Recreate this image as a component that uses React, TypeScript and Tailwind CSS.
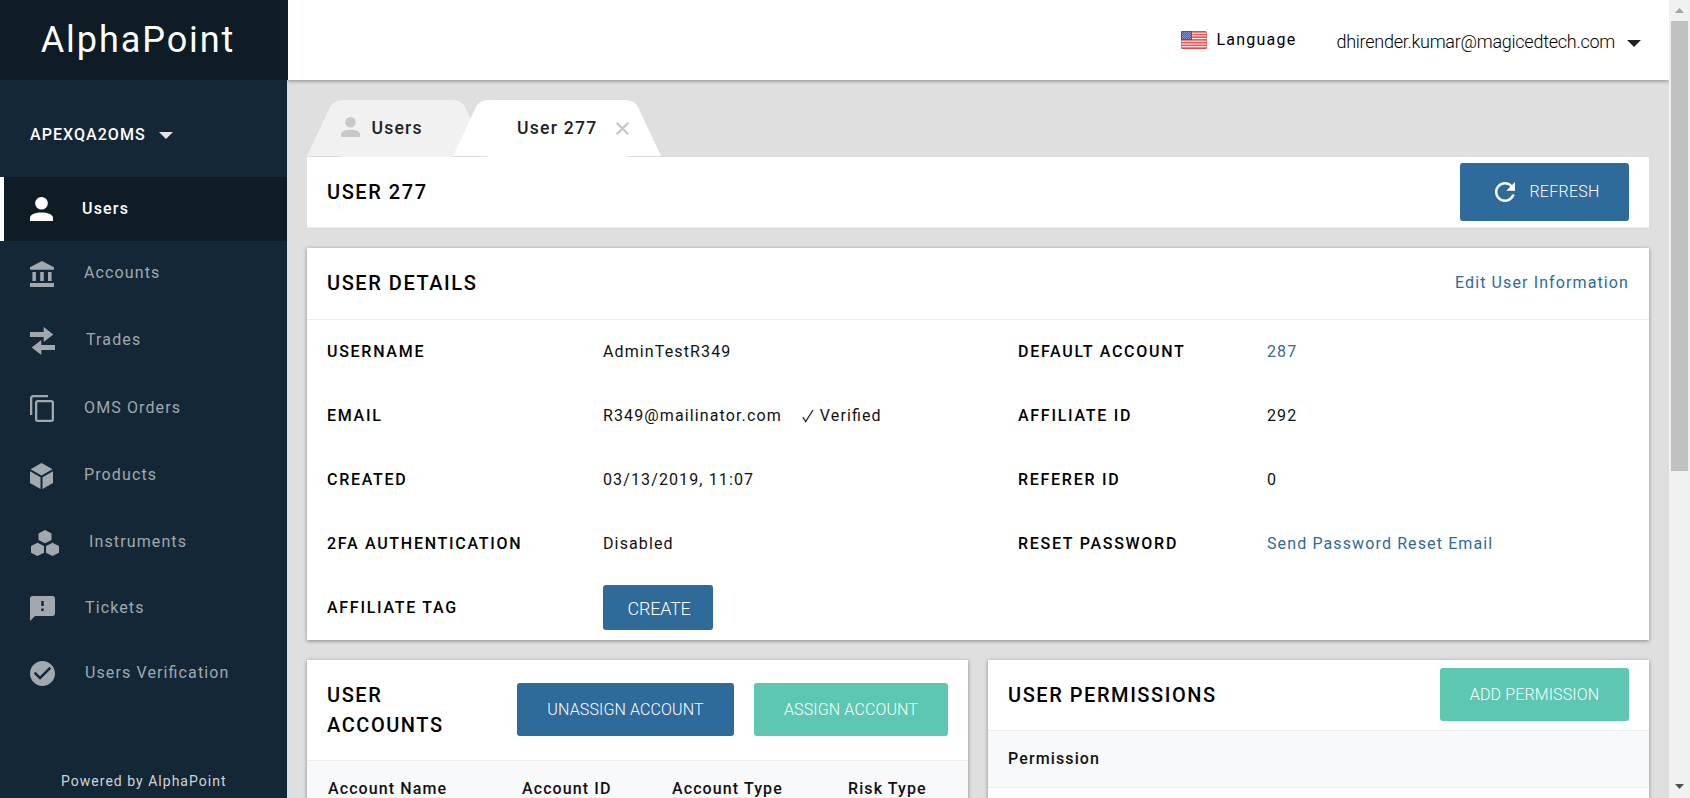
import type { ReactNode } from "react";

type IconProps = { className?: string };

function PersonIcon({ className }: IconProps) {
  return (
    <svg className={className} width="23" height="24" viewBox="0 0 23 24" fill="currentColor">
      <circle cx="11.5" cy="6.3" r="6.3" />
      <path d="M0 24v-3.4c0-3.5 6.2-5.2 11.5-5.2S23 17.100 23 20.600V24z" />
    </svg>
  );
}

function BankIcon() {
  return (
    <svg width="24" height="26" viewBox="0 0 24 26" fill="currentColor">
      <path d="M12 0 24 6.200V8.700H0V6.200zM2.400 11h3.500v9H2.400zM10.200 11h3.600v9h-3.600zM18 11h3.600v9H18zM0 22h24v4H0z" />
    </svg>
  );
}

function SwapIcon() {
  return (
    <svg width="25" height="28" viewBox="0 0 25 28" fill="currentColor">
      <path d="M0 5h13.700V0L23.300 7.500 13.700 15v-5H0zM25 18H11.300v-5L1.700 20.500l9.600 7.500v-5H25z" />
    </svg>
  );
}

function CopyIcon() {
  return (
    <svg width="24" height="27" viewBox="0 0 24 27" fill="none" stroke="currentColor" strokeWidth="2.300">
      <path d="M1.150 20V3.150a2 2 0 0 1 2-2H18" />
      <rect x="6.150" y="6.150" width="16.700" height="19.700" rx="1.500" />
    </svg>
  );
}

function CubeIcon() {
  return (
    <svg width="23" height="26" viewBox="0 0 23 26" fill="currentColor">
      <path d="M11.500 0 22.500 6.200 11.500 12.400.5 6.200zM0 8.300l10.500 6V26L0 20zM23 8.300l-10.500 6V26L23 20z" />
    </svg>
  );
}

function HexagonsIcon() {
  return (
    <svg className="ml-px" width="28" height="26" viewBox="0 0 28 26" fill="currentColor">
      <path d="M14 0l6.500 3.400v6.600L14 13.300 7.500 10V3.400zM6.500 12.700 13 16v6.700L6.500 26 0 22.700V16zM21.500 12.700 28 16v6.700L21.500 26 15 22.700V16z" />
    </svg>
  );
}

function FeedbackIcon() {
  return (
    <svg width="25" height="25" viewBox="2 2 20 20" fill="currentColor">
      <path d="M20 2H4c-1.100 0-1.990.9-1.990 2L2 22l4-4h14c1.100 0 2-.9 2-2V4c0-1.100-.9-2-2-2zm-7 12h-2v-2h2v2zm0-4h-2V6h2v4z" />
    </svg>
  );
}

function CheckCircleIcon() {
  return (
    <svg width="25" height="25" viewBox="2 2 20 20" fill="currentColor">
      <path d="M12 2C6.480 2 2 6.480 2 12s4.480 10 10 10 10-4.480 10-10S17.520 2 12 2zm-2 15l-5-5 1.410-1.410L10 14.170l7.590-7.590L19 8l-9 9z" />
    </svg>
  );
}

function RefreshIcon() {
  return (
    <svg width="20" height="20" viewBox="4 4 16 16" fill="currentColor">
      <path d="M17.650 6.350C16.200 4.900 14.210 4 12 4c-4.420 0-7.990 3.580-7.990 8s3.570 8 7.990 8c3.730 0 6.840-2.550 7.730-6h-2.080c-.82 2.330-3.040 4-5.650 4-3.310 0-6-2.690-6-6s2.690-6 6-6c1.660 0 3.140.69 4.220 1.780L13 11h7V4l-2.350 2.350z" />
    </svg>
  );
}

function Caret({ className }: IconProps) {
  return (
    <svg className={className} width="14" height="7" viewBox="0 0 14 7" fill="currentColor">
      <path d="M0 0h14L7 7z" />
    </svg>
  );
}

function Flag() {
  return (
    <svg width="26" height="18" viewBox="0 0 26 18">
      <defs>
        <clipPath id="flag">
          <rect width="26" height="18" rx="1.500" />
        </clipPath>
        <pattern id="stars" width="2" height="2" patternUnits="userSpaceOnUse">
          <rect width="2" height="2" fill="#4763b0" />
          <rect width="1" height="1" fill="#8494cb" />
          <rect x="1" y="1" width="1" height="1" fill="#8494cb" />
        </pattern>
      </defs>
      <g clipPath="url(#flag)">
        <rect width="26" height="18" fill="#fff" />
        <path
          d="M0 .8h26M0 3.500h26M0 6.200h26M0 8.900h26M0 11.600h26M0 14.300h26M0 17.200h26"
          stroke="#ee5a5a"
          strokeWidth="1.700"
        />
        <rect width="11" height="9" fill="url(#stars)" />
        <rect x=".5" y=".5" width="10" height="8" fill="none" stroke="#3d55a2" />
      </g>
      <rect x=".5" y=".5" width="25" height="17" rx="1.500" fill="none" stroke="#a33" strokeOpacity=".35" />
    </svg>
  );
}

const nav: { label: string; icon: ReactNode; row: string; text: string }[] = [
  { label: "Accounts", icon: <BankIcon />, row: "h-[66px]", text: "pl-[30px] pb-0.5" },
  { label: "Trades", icon: <SwapIcon />, row: "h-[68px]", text: "pl-[31px] pb-0.5" },
  { label: "OMS Orders", icon: <CopyIcon />, row: "h-[67px]", text: "pl-[30px] pb-px" },
  { label: "Products", icon: <CubeIcon />, row: "h-[67px]", text: "pl-[31px] pb-0.5" },
  { label: "Instruments", icon: <HexagonsIcon />, row: "h-[67px]", text: "pl-[30px] pb-0.5" },
  { label: "Tickets", icon: <FeedbackIcon />, row: "h-[65px]", text: "pl-[30px] pb-0.5" },
  { label: "Users Verification", icon: <CheckCircleIcon />, row: "h-[65px]", text: "pl-[30px] pb-0.5" },
];

function Sidebar() {
  return (
    <aside className="flex w-[287px] shrink-0 flex-col bg-[#142736]">
      <div className="z-10 flex h-20 w-[288px] shrink-0 items-center justify-center bg-[#0e1c26] pr-3 text-[36px] tracking-[1.94px] text-white">
        AlphaPoint
      </div>
      <div className="flex h-[97px] shrink-0 items-center pl-[30px] pt-3 text-base font-medium tracking-[1.05px] text-white">
        APEXQA2OMS
        <Caret className="ml-[13px] mt-0.5 text-[#e3e5e7]" />
      </div>
      <nav className="text-base tracking-[1.12px] text-[#a1a8ae]">
        <a className="flex h-16 items-center border-l-4 border-white bg-[#0e1c26] pl-[26px] font-medium tracking-[1.2px] text-white">
          <PersonIcon />
          <span className="pl-[29px]">Users</span>
        </a>
        {nav.map((item) => (
          <a key={item.label} className={`flex items-center pl-[30px] ${item.row}`}>
            {item.icon}
            <span className={item.text}>{item.label}</span>
          </a>
        ))}
      </nav>
      <div className="mt-auto pb-[7px] pl-[61px] text-sm tracking-[1.02px] text-[#d0d4d7]">Powered by AlphaPoint</div>
    </aside>
  );
}

function Header() {
  return (
    <header className="z-[5] flex h-20 shrink-0 items-center justify-end bg-white pr-7 shadow-[0_1px_4px_rgba(0,0,0,0.4)]">
      <Flag />
      <span className="pl-[10px] text-base tracking-[1.22px] text-black">Language</span>
      <span className="pl-10 pt-[3px] text-[18px] font-light tracking-[-0.26px] text-black">
        dhirender.kumar@magicedtech.com
      </span>
      <Caret className="ml-3 mt-[7px] text-[#222]" />
    </header>
  );
}

function Tabs() {
  return (
    <div className="flex h-[57px] shrink-0">
      <div className="relative flex h-[57px] w-[181px] items-center pl-[34px]">
        <svg className="absolute left-0 top-0" width="181" height="57" viewBox="0 0 181 57">
          <path d="M0 56 23 7Q26.500 0 36 0H145Q154.500 0 158 7L181 56V57H34V56z" fill="#f1f1f1" />
        </svg>
        <PersonIcon className="relative mb-[3px] h-5 w-[19px] text-[#c8c8c8]" />
        <span className="relative pl-[11.5px] text-[17.6px] font-medium tracking-[1.2px] text-[#222]">Users</span>
      </div>
      <div className="relative -ml-[35px] flex h-[57px] w-[208px] items-center pl-16">
        <svg className="absolute left-0 top-0" width="208" height="57" viewBox="0 0 208 57">
          <path d="M0 56H34V57H0z" fill="#dedede" />
          <path d="M0 56 23 7Q26.500 0 36 0H172Q181.500 0 185 7L208 56H174V57H34V56z" fill="#fff" />
        </svg>
        <span className="relative text-[17.6px] font-medium tracking-[1.25px] text-[#222]">User 277</span>
        <svg className="relative mb-px ml-[18px]" width="13" height="13" viewBox="0 0 13 13" stroke="#c4c4c4" strokeWidth="2">
          <path d="m.7.7 11.600 11.600M12.300.7.7 12.300" />
        </svg>
      </div>
    </div>
  );
}

const buttonBase = "flex items-center justify-center rounded-[3px] font-light text-white";

function Heading({ children }: { children: ReactNode }) {
  return <h2 className="text-[20px] font-medium leading-[30px] tracking-[1.55px] text-black">{children}</h2>;
}

const card = "bg-white shadow-[0_1px_4px_rgba(0,0,0,0.4)]";
const label = "font-medium tracking-[1.72px] text-black";
const link = "text-[#2e6a9a]";

const rows: { left: string; value: ReactNode; right?: string; rightValue?: ReactNode }[] = [
  { left: "USERNAME", value: "AdminTestR349", right: "DEFAULT ACCOUNT", rightValue: <a className={link}>287</a> },
  {
    left: "EMAIL",
    value: (
      <span className="flex items-center">
        R349@mailinator.com
        <svg className="ml-5 mr-[6px]" width="12" height="14" viewBox="0 0 12 14" fill="none" stroke="#222">
          <path d="M.8 8.200 3.700 12.500 11 1" strokeWidth="1.300" />
        </svg>
        Verified
      </span>
    ),
    right: "AFFILIATE ID",
    rightValue: "292",
  },
  { left: "CREATED", value: "03/13/2019, 11:07", right: "REFERER ID", rightValue: "0" },
  {
    left: "2FA AUTHENTICATION",
    value: "Disabled",
    right: "RESET PASSWORD",
    rightValue: <a className={link}>Send Password Reset Email</a>,
  },
  {
    left: "AFFILIATE TAG",
    value: (
      <button className={`${buttonBase} mb-px h-[45px] w-[110px] bg-[#2e6a9a] pl-0.5 pt-0.5 text-[18px] tracking-[-0.25px]`}>
        CREATE
      </button>
    ),
  },
];

function Details() {
  return (
    <section className={`h-[392px] shrink-0 ${card}`}>
      <div className="flex h-[72px] items-center justify-between border-b border-[#ececec] px-5">
        <div className="pb-0.5">
          <Heading>USER DETAILS</Heading>
        </div>
        <a className="pb-0.5 text-base tracking-[1.11px] text-[#2e6a9a]">Edit User Information</a>
      </div>
      {rows.map((row) => (
        <div
          key={row.left}
          className="grid h-16 grid-cols-[276px_415px_249px_1fr] items-center pb-px pl-5 text-base tracking-[1.12px] text-[#111]"
        >
          <span className={label}>{row.left}</span>
          <span>{row.value}</span>
          <span className={label}>{row.right}</span>
          <span>{row.rightValue}</span>
        </div>
      ))}
    </section>
  );
}

function Accounts() {
  return (
    <section className={`h-[200px] w-[661px] ${card}`}>
      <div className="flex h-[101px] justify-between border-b border-[#ececec] px-5">
        <div className="w-[140px] pt-5">
          <Heading>USER ACCOUNTS</Heading>
        </div>
        <div className="flex gap-5 pt-[23px] text-base tracking-[0.13px]">
          <button className={`${buttonBase} h-[53px] w-[217px] bg-[#2e6a9a]`}>UNASSIGN ACCOUNT</button>
          <button className={`${buttonBase} h-[53px] w-[194px] bg-[#5dc7b1]`}>ASSIGN ACCOUNT</button>
        </div>
      </div>
      <div className="grid h-[57px] grid-cols-[194px_150px_176px_1fr] items-center bg-[#f7f9fb] pb-0.5 pl-[21px] text-base font-medium tracking-[1.1px] text-[#111]">
        <span>Account Name</span>
        <span>Account ID</span>
        <span>Account Type</span>
        <span>Risk Type</span>
      </div>
    </section>
  );
}

function Permissions() {
  return (
    <section className={`h-[200px] w-[661px] ${card}`}>
      <div className="flex h-[71px] justify-between border-b border-[#ececec] px-5">
        <div className="pt-5">
          <Heading>USER PERMISSIONS</Heading>
        </div>
        <button className={`${buttonBase} mt-2 h-[53px] w-[189px] bg-[#5dc7b1] text-base tracking-[0.13px]`}>
          ADD PERMISSION
        </button>
      </div>
      <div className="flex h-[57px] items-center border-b border-[#ececec] bg-[#f7f9fb] pl-5 text-base font-medium tracking-[1.12px] text-[#111]">
        Permission
      </div>
    </section>
  );
}

export default function App() {
  return (
    <div className="flex h-[798px] w-[1690px] overflow-hidden bg-[#dfdfdf] font-['Roboto',sans-serif] [font-feature-settings:'liga'_1]">
      <Sidebar />
      <div className="flex w-[1382px] shrink-0 flex-col overflow-hidden">
        <Header />
        <main className="flex flex-col px-5 pt-5">
          <Tabs />
          <section className="flex h-[71px] shrink-0 items-center justify-between border-b border-[#ececec] bg-white px-5">
            <Heading>USER 277</Heading>
            <button className={`${buttonBase} h-[58px] w-[169px] bg-[#2e6a9a] pl-1.5 text-base tracking-[0.25px]`}>
              <RefreshIcon />
              <span className="pb-px pl-[14px]">REFRESH</span>
            </button>
          </section>
          <div className="h-5 shrink-0" />
          <Details />
          <div className="mt-5 flex shrink-0 justify-between">
            <Accounts />
            <Permissions />
          </div>
        </main>
      </div>
      <div className="flex w-[21px] shrink-0 flex-col items-center bg-[#f1f1f1]">
        <div className="flex h-[21px] shrink-0 items-center">
          <svg width="9" height="5" viewBox="0 0 9 5" fill="#a3a3a3">
            <path d="M4.500 0 9 5H0z" />
          </svg>
        </div>
        <div className="h-[450px] w-[17px] bg-[#c1c1c1]" />
        <svg className="mb-[9px] mt-auto" width="9" height="5" viewBox="0 0 9 5" fill="#505050">
          <path d="M0 0h9L4.500 5z" />
        </svg>
      </div>
    </div>
  );
}
